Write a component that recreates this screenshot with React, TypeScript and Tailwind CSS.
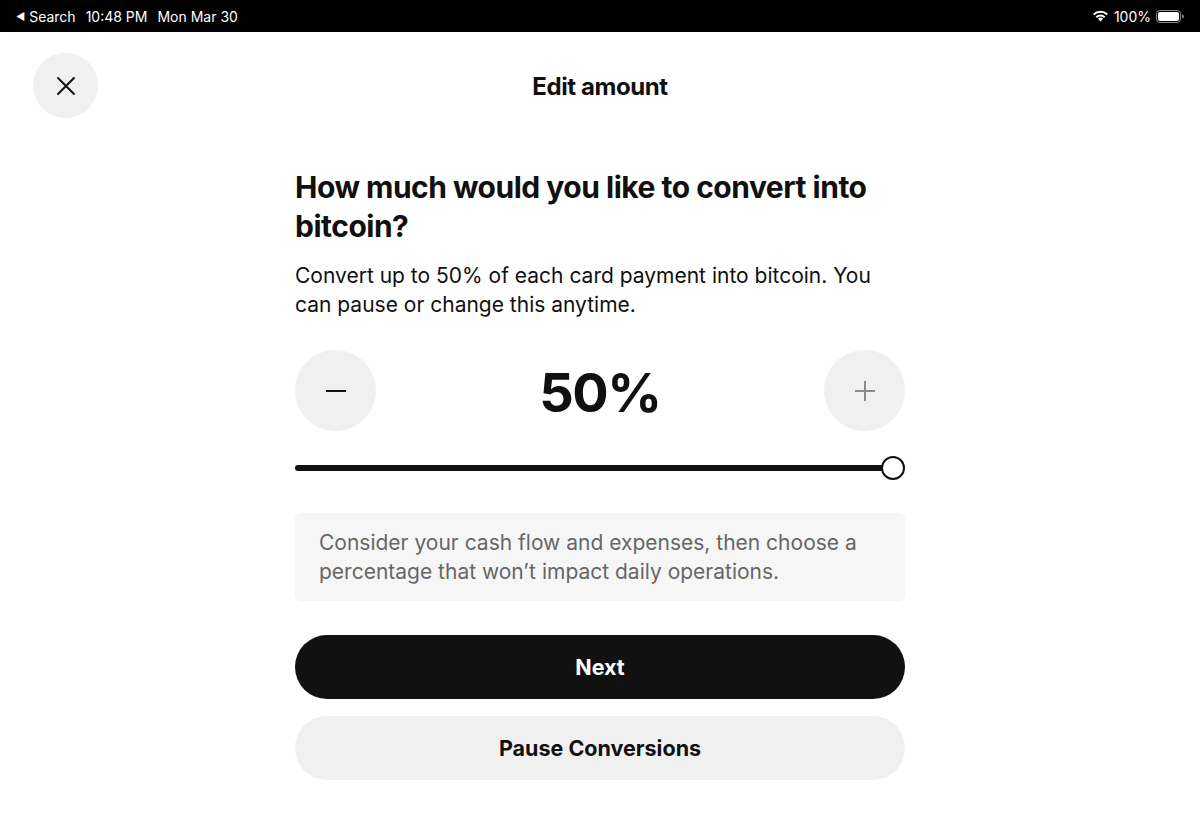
import React, { useState } from 'react';

const font = { fontFamily: 'Inter, "Noto Sans", sans-serif' };

function StatusBar() {
  return (
    <div className="h-[32px] bg-black text-white flex items-center justify-between px-[16px] text-[14px]">
      <div className="flex items-center gap-[10px]">
        <span className="flex items-center gap-[4px]">
          <span className="text-[10px]">◀</span>
          <span>Search</span>
        </span>
        <span>10:48 PM</span>
        <span>Mon Mar 30</span>
      </div>
      <div className="flex items-center gap-[5px]">
        <svg width="17" height="12" viewBox="0 0 17 12">
          <path d="M8.5 11.5 L6 8.8 A3.6 3.6 0 0 1 11 8.8 Z" fill="white" />
          <path d="M3.6 6.4 A7 7 0 0 1 13.4 6.4 L12 7.9 A5 5 0 0 0 5 7.9 Z" fill="white" />
          <path d="M1 3.8 A10.8 10.8 0 0 1 16 3.8 L14.6 5.2 A8.8 8.8 0 0 0 2.4 5.2 Z" fill="white" />
        </svg>
        <span>100%</span>
        <svg width="28" height="13" viewBox="0 0 28 13">
          <rect x="0.5" y="0.5" width="24" height="12" rx="3.5" fill="none" stroke="#8a8a8a" />
          <rect x="2" y="2" width="21" height="9" rx="2" fill="white" />
          <path d="M26 4.5 a1.5 1.5 0 0 1 0 4 z" fill="#8a8a8a" />
        </svg>
      </div>
    </div>
  );
}

export default function App() {
  const [pct, setPct] = useState(50);

  return (
    <div className="w-[1200px] h-[834px] bg-white text-[#101010] overflow-hidden" style={font}>
      <StatusBar />

      <div className="relative h-[110px] flex items-center justify-center">
        <button className="absolute left-[33px] top-[21px] w-[65px] h-[65px] rounded-full bg-[#f0f0f0] flex items-center justify-center">
          <svg width="20" height="20" viewBox="0 0 20 20" fill="none" stroke="#111" strokeWidth="2" strokeLinecap="round">
            <path d="M2 2 L18 18 M18 2 L2 18" />
          </svg>
        </button>
        <h1 className="text-[24px] font-bold tracking-[-0.4px]">Edit amount</h1>
      </div>

      <div className="w-[610px] mx-auto">
        <h2 className="text-[30px] leading-[39px] font-bold tracking-[-0.5px] mt-[26px]">
          How much would you like to convert into bitcoin?
        </h2>
        <p className="text-[21px] leading-[29px] mt-[15px]">
          Convert up to 50% of each card payment into bitcoin. You can pause or change this anytime.
        </p>

        <div className="flex items-center justify-between mt-[31px]">
          <button
            onClick={() => setPct(Math.max(0, pct - 1))}
            className="w-[81px] h-[81px] rounded-full bg-[#f0f0f0] flex items-center justify-center"
          >
            <svg width="20" height="4" viewBox="0 0 20 4">
              <rect x="0" y="1" width="20" height="2" fill="#111" />
            </svg>
          </button>
          <div className="text-[54px] font-bold tracking-[-1.5px] leading-none mt-[4px]">{pct}%</div>
          <button className="w-[81px] h-[81px] rounded-full bg-[#f0f0f0] flex items-center justify-center">
            <svg width="20" height="20" viewBox="0 0 20 20">
              <rect x="0" y="9" width="20" height="2" fill="#8a8a8a" />
              <rect x="9" y="0" width="2" height="20" fill="#8a8a8a" />
            </svg>
          </button>
        </div>

        <div className="relative h-[26px] mt-[24px] flex items-center">
          <div className="h-[6px] w-[598px] rounded-full bg-[#111]" />
          <div className="absolute left-[586px] top-[1px] w-[24px] h-[24px] rounded-full bg-white border-[2px] border-[#111]" />
        </div>

        <div className="mt-[32px] bg-[#f6f6f6] rounded-[6px] px-[24px] pt-[15px] pb-[14px] h-[88px]">
          <p className="text-[21px] leading-[29px] text-[#666]">
            Consider your cash flow and expenses, then choose a percentage that won’t impact daily operations.
          </p>
        </div>

        <button className="mt-[34px] w-full h-[64px] rounded-full bg-[#111] text-white text-[21.5px] font-bold">
          Next
        </button>
        <button className="mt-[17px] w-full h-[64px] rounded-full bg-[#f0f0f0] text-[#111] text-[21.5px] font-bold">
          Pause Conversions
        </button>
      </div>
    </div>
  );
}
